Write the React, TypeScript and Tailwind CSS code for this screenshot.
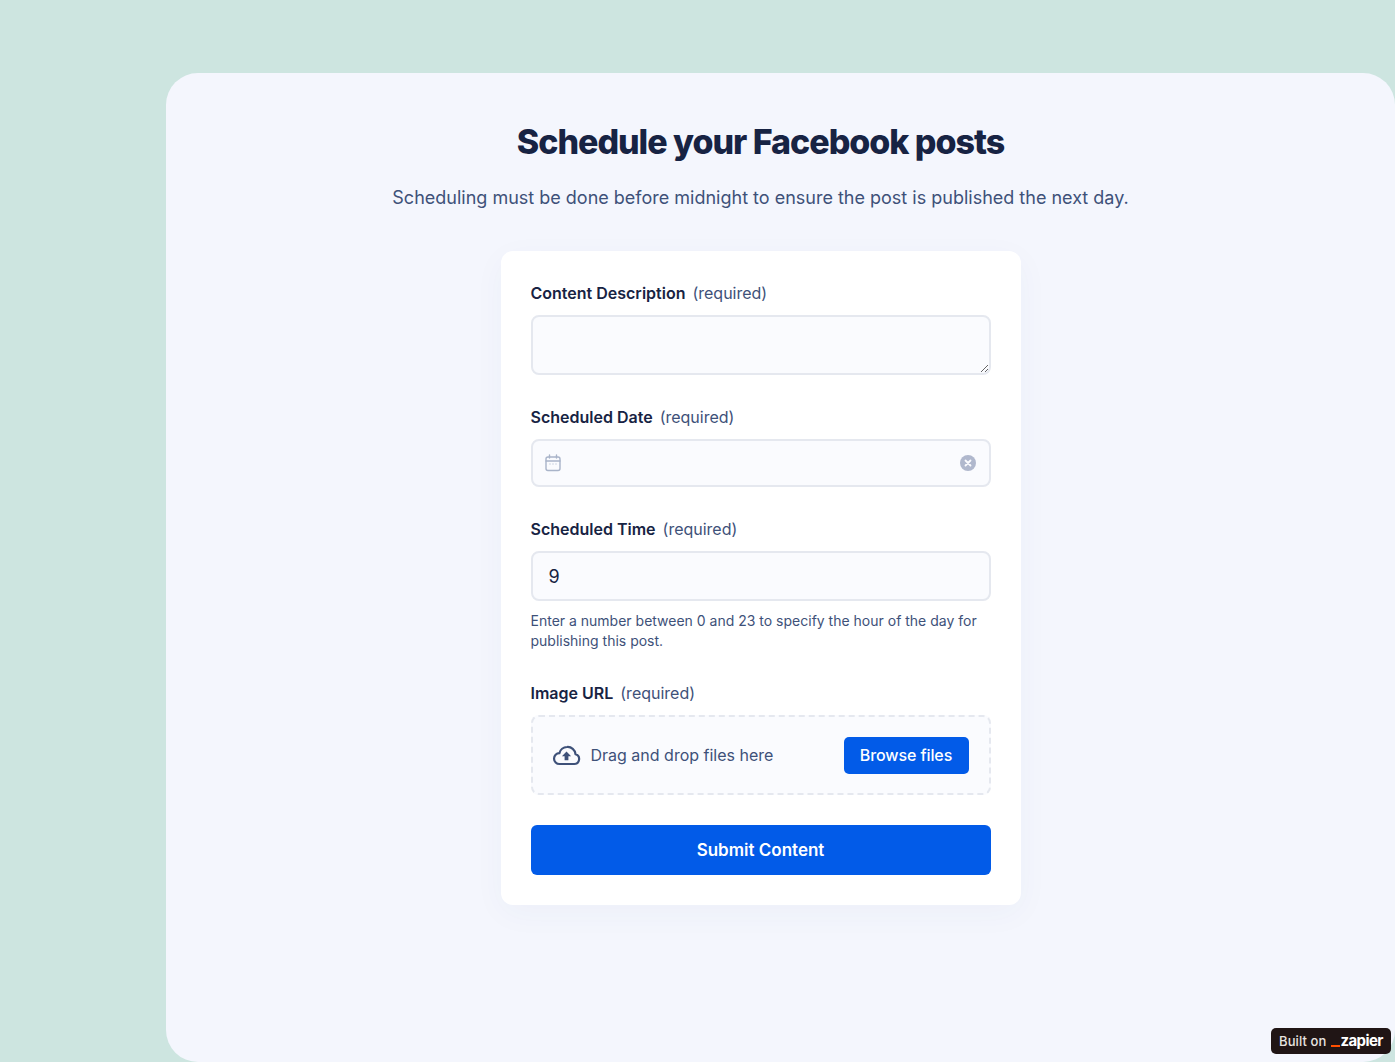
export default function App() {
  const Label = ({ name }: { name: string }) => (
    <div className="flex items-center h-5 gap-[7px] text-[16px] leading-5">
      <span className="font-semibold text-[#172343]">{name}</span>
      <span className="text-[#3e5179]">(required)</span>
    </div>
  );
  return (
    <div className="w-[1395px] h-[1062px] overflow-hidden bg-[#cde5e0] pt-[73px] pl-[166px] relative font-['Inter',sans-serif]">
      <main className="h-[989px] rounded-[32px] bg-[#f4f6fd] pr-[40px] flex flex-col items-center">
        <h1 className="mt-[46px] text-[34px] leading-[46px] font-extrabold tracking-[-1.03px] text-[#172343]">Schedule your Facebook posts</h1>
        <p className="mt-[20px] text-[18px] leading-[26px] text-[#3e5179]">Scheduling must be done before midnight to ensure the post is published the next day.</p>
        <form className="mt-[40px] w-[520px] h-[654px] bg-white rounded-[12px] p-[30px] shadow-[0_8px_32px_rgba(60,80,140,0.04)] flex flex-col">
          <div className="mt-[2px]"><Label name="Content Description" /></div>
          <textarea className="mt-[12px] block w-full h-[60px] bg-[#fafbfe] border-2 border-[#e5e8ef] rounded-[8px] outline-none"></textarea>
          <div className="mt-[32px]"><Label name="Scheduled Date" /></div>
          <div className="mt-[12px] h-[48px] bg-[#fafbfe] border-2 border-[#e5e8ef] rounded-[8px] flex items-center justify-between pl-[11px] pr-[13px]">
            <svg width="18" height="18" viewBox="0 0 18 18" fill="none" stroke="#a9b4c9" strokeWidth="1.4">
              <rect x="2" y="3" width="14" height="13.5" rx="2" />
              <path d="M2 7h14M5.5 1v3M12.5 1v3" strokeLinecap="round" />
              <path d="M5.5 10h1M8.5 10h1M11.5 10h1" strokeWidth="1.1" />
            </svg>
            <svg width="16" height="16" viewBox="0 0 16 16">
              <circle cx="8" cy="8" r="8" fill="#b0b8cd" />
              <path d="M5.5 5.5l5 5M10.5 5.5l-5 5" stroke="#fafbfe" strokeWidth="1.8" strokeLinecap="round" />
            </svg>
          </div>
          <div className="mt-[32px]"><Label name="Scheduled Time" /></div>
          <div className="mt-[12px] h-[50px] bg-[#fafbfe] border-2 border-[#e5e8ef] rounded-[8px] flex items-center pl-[16px] text-[18px] text-[#172343]">9</div>
          <p className="mt-[10px] text-[14px] leading-[20px] text-[#3e5179]">Enter a number between 0 and 23 to specify the hour of the day for publishing this post.</p>
          <div className="mt-[32px]"><Label name="Image URL" /></div>
          <div className="mt-[12px] h-[80px] bg-[#fafbfe] border-2 border-dashed border-[#e5e8ef] rounded-[8px] flex items-center justify-between pl-[19px] pr-[20px]">
            <div className="flex items-center gap-[10px]">
              <svg width="29" height="22" viewBox="0 0 29 22" fill="none">
                <path d="M7.5 20h14.8a5 5 0 0 0 1.2-9.8A7.8 7.8 0 0 0 15 3 8 8 0 0 0 7.4 9.2 5.4 5.4 0 0 0 7.5 20z" stroke="#3e5179" strokeWidth="2.2" strokeLinejoin="round" />
                <path d="M14.5 7.5l4.6 4.7h-2.7v4h-3.8v-4H9.9z" fill="#3e5179" />
              </svg>
              <span className="text-[16px] text-[#3e5179]">Drag and drop files here</span>
            </div>
            <button type="button" className="h-[37px] w-[125px] rounded-[5px] bg-[#025be8] text-white text-[16px] font-medium tracking-[-0.1px]">Browse files</button>
          </div>
          <button type="button" className="mt-[30px] h-[50px] pt-[2px] rounded-[6px] bg-[#025be8] text-white text-[17px] font-semibold">Submit Content</button>
        </form>
      </main>
      <div className="absolute left-[1271px] top-[1028px] w-[120px] h-[26px] rounded-[5px] bg-[#201515] flex items-center pl-[8px] text-[13px] font-medium text-[#e8e4e0]">
        <span className="leading-none tracking-[0.1px]">Built on</span>
        <span className="ml-[5px] w-[9px] h-[2px] bg-[#ff4f00] mt-[9px]"></span>
        <span className="text-white font-bold text-[15px] tracking-[-0.6px] leading-none -translate-y-[1px]">zapier</span>
      </div>
    </div>
  );
}
